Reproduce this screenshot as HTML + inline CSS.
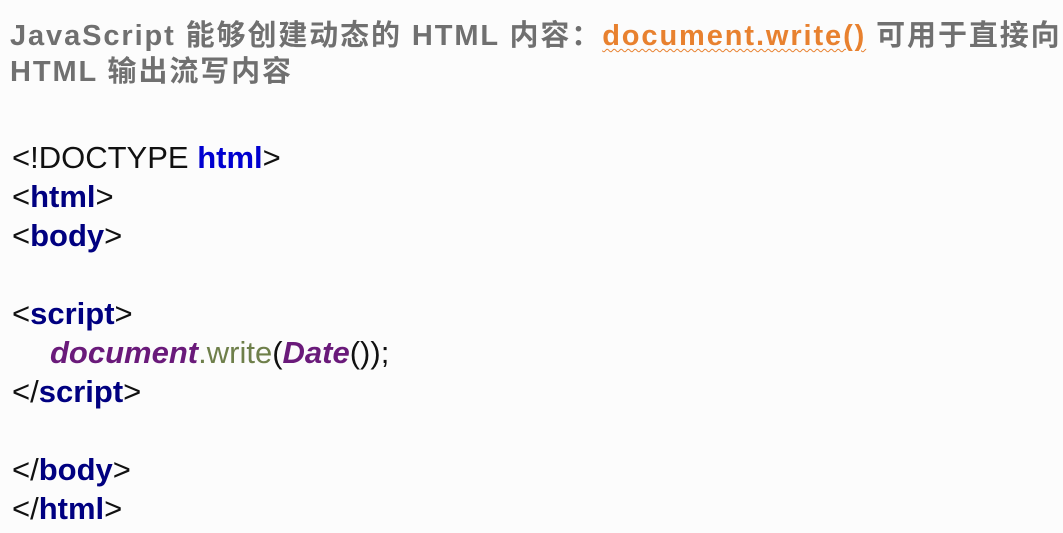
<!DOCTYPE html>
<html><head><style>
body{margin:0;width:1063px;height:533px;background:#fcfcfc;overflow:hidden;position:relative;font-family:"Liberation Sans","Noto Sans CJK SC",sans-serif}
.t{position:absolute;left:10px;font-size:29px;font-weight:bold;color:#707070;white-space:nowrap;line-height:34px;letter-spacing:1.9px}
.o{color:#e8812f;text-decoration:underline wavy #e8812f;text-decoration-thickness:1px;text-underline-offset:3px}
.c{position:absolute;left:12px;font-size:31px;color:#111;white-space:nowrap;line-height:32px;letter-spacing:0px}
.n{color:#000080;font-weight:bold}
.b{color:#0000d0;font-weight:bold}
.p{color:#6a1a7a;font-style:italic;font-weight:bold}
.g{color:#6e7f4a}
</style></head><body>
<div class="t" style="top:19px">JavaScript 能够创建动态的 HTML 内容：<span class="o">document.write()</span> 可用于直接向</div>
<div class="t" style="top:55px">HTML 输出流写内容</div>
<div class="c" style="top:142px">&lt;!DOCTYPE <span class="b">html</span>&gt;</div>
<div class="c" style="top:181px">&lt;<span class="n">html</span>&gt;</div>
<div class="c" style="top:220px">&lt;<span class="n">body</span>&gt;</div>
<div class="c" style="top:298px">&lt;<span class="n">script</span>&gt;</div>
<div class="c" style="top:337px;left:50px"><span class="p">document</span><span class="g">.write</span>(<span class="p">Date</span>());</div>
<div class="c" style="top:376px">&lt;/<span class="n">script</span>&gt;</div>
<div class="c" style="top:454px">&lt;/<span class="n">body</span>&gt;</div>
<div class="c" style="top:493px">&lt;/<span class="n">html</span>&gt;</div>
</body></html>
